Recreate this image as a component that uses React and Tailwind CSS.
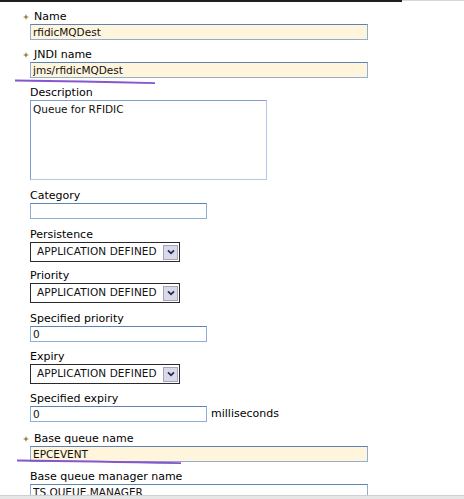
import React from 'react'

const font = "font-['DejaVu_Sans','Verdana',sans-serif]"

// tiny olive marker that flags required fields
function Req() {
  return (
    <svg width="6" height="6" viewBox="0 0 10 10" className="shrink-0">
      <path d="M5 0 L6.4 3.6 L10 5 L6.4 6.4 L5 10 L3.6 6.4 L0 5 L3.6 3.6 Z" fill="#8f7c34" />
    </svg>
  )
}

function Label({ children, required, gap }) {
  return (
    <div className={`flex items-center h-[14px] leading-[14px] text-[11px] text-black ${gap} ${required ? 'ml-[-7px] gap-[5px]' : ''}`}>
      {required && <Req />}
      <span>{children}</span>
    </div>
  )
}

function TextBox({ value = '', width, required }) {
  return (
    <input
      readOnly
      defaultValue={value}
      className={`${width} h-[16px] px-[2px] text-[10.5px] leading-[14px] text-[#111] border border-[#8eaed3] border-t-[#5b84b5] outline-none ${required ? 'bg-[#fff4dc]' : 'bg-white'} ${font}`}
    />
  )
}

function Dropdown({ value }) {
  return (
    <div className="w-[150px] h-[20px] flex items-center justify-between border border-[#2a2a2a] bg-white pl-[6px] pr-[1px]">
      <span className="text-[10.5px] text-[#111] tracking-[0.1px]">{value}</span>
      <span className="w-[15px] h-[15px] flex items-center justify-center bg-[#d9d9e8] border border-[#a3a3bd]">
        <svg width="8" height="6" viewBox="0 0 9 7">
          <path d="M1 1.5 L4.5 5 L8 1.5" fill="none" stroke="#1d2a5a" strokeWidth="2" />
        </svg>
      </span>
    </div>
  )
}

function Mark({ top, left, width }) {
  return (
    <svg
      className="absolute pointer-events-none"
      style={{ top, left }}
      width={width}
      height="6"
      viewBox={`0 0 ${width} 6`}
    >
      <path d={`M0 1.5 Q ${width * 0.45} 2.2 ${width} 4.2`} fill="none" stroke="#8656cc" strokeWidth="1.8" />
    </svg>
  )
}

export default function App() {
  return (
    <div className={`relative w-[464px] h-[499px] overflow-hidden bg-white ${font}`}>
      <div className="flex">
        <div className="w-[402px] h-[2px] bg-[#1e1e1e]" />
        <div className="flex-1 h-[1px] bg-[#d8d8d8]" />
      </div>

      <div className="flex flex-col items-start pl-[30px]">
        <Label required gap="mt-[8px]">Name</Label>
        <TextBox value="rfidicMQDest" width="w-[338px]" required />

        <Label required gap="mt-[8px]">JNDI name</Label>
        <TextBox value="jms/rfidicMQDest" width="w-[338px]" required />

        <Label gap="mt-[8px]">Description</Label>
        <textarea
          readOnly
          defaultValue="Queue for RFIDIC"
          className={`w-[237px] h-[80px] px-[2px] py-[1px] resize-none text-[10.5px] leading-[14px] text-[#111] border border-[#7f9fcf] border-r-[#b3c8e6] border-b-[#b3c8e6] outline-none bg-white ${font}`}
        />

        <Label gap="mt-[9px]">Category</Label>
        <TextBox width="w-[177px]" />

        <Label gap="mt-[9px]">Persistence</Label>
        <Dropdown value="APPLICATION DEFINED" />

        <Label gap="mt-[7px]">Priority</Label>
        <Dropdown value="APPLICATION DEFINED" />

        <Label gap="mt-[9px]">Specified priority</Label>
        <TextBox value="0" width="w-[177px]" />

        <Label gap="mt-[8px]">Expiry</Label>
        <Dropdown value="APPLICATION DEFINED" />

        <Label gap="mt-[8px]">Specified expiry</Label>
        <div className="flex items-center gap-[4px]">
          <TextBox value="0" width="w-[177px]" />
          <span className="text-[11px] text-black">milliseconds</span>
        </div>

        <Label required gap="mt-[9px]">Base queue name</Label>
        <TextBox value="EPCEVENT" width="w-[338px]" required />

        <Label gap="mt-[8px]">Base queue manager name</Label>
        <TextBox value="TS.QUEUE.MANAGER" width="w-[338px]" />
      </div>

      {/* hand-drawn annotation strokes */}
      <Mark top={79} left={15} width={140} />
      <Mark top={459} left={17} width={164} />

      {/* frame edge at the bottom */}
      <div className="absolute left-0 right-0 bottom-0 h-[4px] bg-[#e6e6e6] border-t border-[#cfcfcf]" />
    </div>
  )
}
